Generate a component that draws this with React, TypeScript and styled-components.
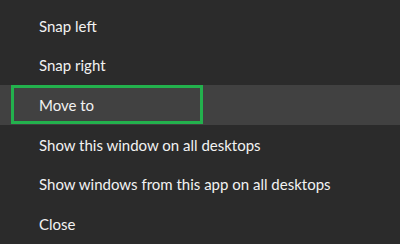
import styled, { createGlobalStyle } from "styled-components";

const GlobalStyle = createGlobalStyle`
    html, body {
        margin: 0;
        padding: 0;
        background: #2b2b2b;
    }
`;

const Menu = styled.ul`
    list-style: none;
    margin: 0;
    padding: 6px 0 0;
    width: 400px;
    height: 244px;
    overflow: hidden;
    box-sizing: border-box;
    background: #2b2b2b;
    font-family: "Lato", "Open Sans", sans-serif;
    font-size: 15px;
    color: #f2f2f2;
`;

const Item = styled.li<{ $active?: boolean }>`
    position: relative;
    display: flex;
    align-items: center;
    height: 39.6px;
    padding-left: 39px;
    background: ${(p) => (p.$active ? "#414141" : "transparent")};
`;

const Callout = styled.span`
    position: absolute;
    left: 11px;
    top: 0;
    width: 192px;
    height: 39px;
    box-sizing: border-box;
    border: 3px solid #23b14d;
    pointer-events: none;
`;

const items = [
    "Snap left",
    "Snap right",
    "Move to",
    "Show this window on all desktops",
    "Show windows from this app on all desktops",
    "Close",
];

export default function App() {
    return (
        <>
            <GlobalStyle />
            <Menu>
                {items.map((label) => (
                    <Item key={label} $active={label === "Move to"}>
                        {label}
                        {label === "Move to" && <Callout />}
                    </Item>
                ))}
            </Menu>
        </>
    );
}
